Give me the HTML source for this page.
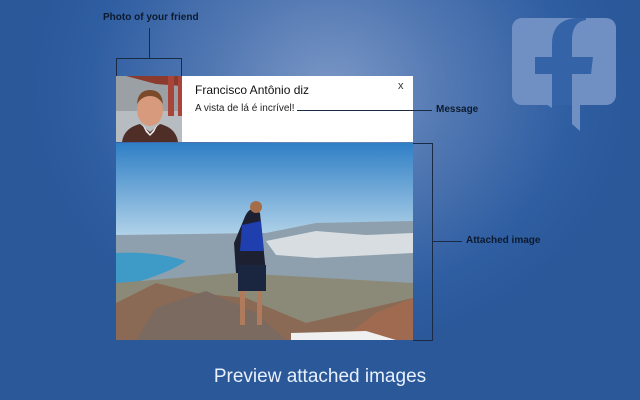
<!DOCTYPE html>
<html><head><style>
body{margin:0;width:640px;height:400px;overflow:hidden;font-family:"Liberation Sans",sans-serif;}
#bg{position:absolute;left:0;top:0;width:640px;height:400px;background:radial-gradient(ellipse 300px 260px at 330px 90px,#7a97c6 0%,#5278b2 40%,#2f5ea2 80%,#2a5899 100%);}
.lbl{position:absolute;font-size:10px;font-weight:bold;color:#0d1a2e;}
.ln{position:absolute;background:#1b2a44;}
</style></head><body>
<div id="bg"></div>
<div class="lbl" style="left:103px;top:12px">Photo of your friend</div>
<div class="ln" style="left:149px;top:28px;width:1px;height:31px"></div>
<div class="ln" style="left:116px;top:58px;width:66px;height:1px"></div>
<div class="ln" style="left:116px;top:58px;width:1px;height:18px"></div>
<div class="ln" style="left:181px;top:58px;width:1px;height:18px"></div>

<div style="position:absolute;left:116px;top:76px;width:297px;height:66px;background:#fff"></div>
<svg style="position:absolute;left:116px;top:76px" width="66" height="66" viewBox="0 0 66 66">
<rect width="66" height="66" fill="#9aa0a4"/>
<rect x="0" y="35" width="66" height="31" fill="#b6bcbf"/>
<polygon points="10,0 66,0 66,10 40,8" fill="#8b3a2e"/>
<rect x="52" y="0" width="6" height="40" fill="#a8443a"/>
<rect x="62" y="0" width="4" height="40" fill="#a8443a"/>
<ellipse cx="34" cy="34" rx="13" ry="16" fill="#d79a7c"/>
<path d="M21 28 Q22 14 34 14 Q46 14 47 28 Q42 20 34 20 Q26 20 21 28Z" fill="#7a4a2a"/>
<path d="M6 66 Q8 52 24 48 L34 56 L44 48 Q60 52 62 66Z" fill="#4e2e26"/>
<path d="M26 48 L34 58 L42 48 L38 56 L34 60 L30 56Z" fill="#eee"/>
</svg>
<div style="position:absolute;left:195px;top:83px;font-size:12px;color:#111">Francisco Antônio diz</div>
<div style="position:absolute;left:195px;top:103px;font-size:10px;color:#222">A vista de lá é incrível!</div>
<div style="position:absolute;left:398px;top:80px;font-size:11px;color:#333">x</div>
<div class="ln" style="left:297px;top:110px;width:135px;height:1px"></div>
<div class="lbl" style="left:436px;top:104px">Message</div>

<svg style="position:absolute;left:116px;top:143px" width="297" height="197" viewBox="0 0 297 197">
<defs><linearGradient id="sky" x1="0" y1="0" x2="0" y2="1"><stop offset="0" stop-color="#2f7fc6"/><stop offset="1" stop-color="#b7d6ea"/></linearGradient></defs>
<rect width="297" height="97" fill="url(#sky)"/>
<path d="M0 92 L150 90 L200 80 L297 78 L297 197 L0 197Z" fill="#8ea0ad"/>
<path d="M150 98 L200 88 L250 92 L297 90 L297 110 L200 115 L160 112Z" fill="#d8dde2"/>
<path d="M0 110 Q40 108 70 118 Q50 132 0 145Z" fill="#3e9ac6"/>
<path d="M0 140 L120 130 L297 140 L297 197 L0 197Z" fill="#8b8a78"/>
<path d="M0 160 L40 140 L80 150 L130 155 L190 180 L297 155 L297 197 L0 197Z" fill="#8a6a55"/>
<path d="M20 197 L40 165 L90 148 L140 170 L170 197Z" fill="#7a6a60"/>
<path d="M225 197 L260 170 L297 155 L297 197Z" fill="#a06a50"/>
<path d="M175 190 L250 188 L280 197 L175 197Z" fill="#f0f0f0"/>
<path d="M128 76 Q134 60 144 70 L148 110 L150 130 L120 130 L118 100Z" fill="#1c2030"/>
<path d="M126 82 L145 78 L148 108 L124 108Z" fill="#1f3fae"/>
<rect x="122" y="122" width="28" height="26" fill="#1a2540"/>
<rect x="124" y="148" width="5" height="34" fill="#b07a5c"/>
<rect x="141" y="148" width="5" height="34" fill="#b07a5c"/>
<circle cx="140" cy="64" r="6" fill="#a56c4a"/>
</svg>
<div class="ln" style="left:413px;top:143px;width:20px;height:1px"></div>
<div class="ln" style="left:413px;top:340px;width:20px;height:1px"></div>
<div class="ln" style="left:432px;top:143px;width:1px;height:198px"></div>
<div class="ln" style="left:432px;top:241px;width:30px;height:1px"></div>
<div class="lbl" style="left:466px;top:235px">Attached image</div>

<svg style="position:absolute;left:500px;top:0" width="140" height="140" viewBox="0 0 140 140">
<rect x="12" y="18" width="104" height="87" rx="10" fill="#7090c4"/>
<polygon points="40,100 52,100 52,108" fill="#7090c4"/>
<polygon points="72,100 80,100 80,131 72,124" fill="#7090c4"/>
<path d="M52 105 L52 44 Q52 20 76 18 L86 18 L86 20 Q72 22 72 40 L72 105Z" fill="#3464a7"/>
<path d="M35 57 L93 57 L91 74 L35 74Z" fill="#3464a7"/>
</svg>

<div style="position:absolute;left:0;width:640px;top:366px;text-align:center;font-size:19px;color:#e8f0fb">Preview attached images</div>
</body></html>
